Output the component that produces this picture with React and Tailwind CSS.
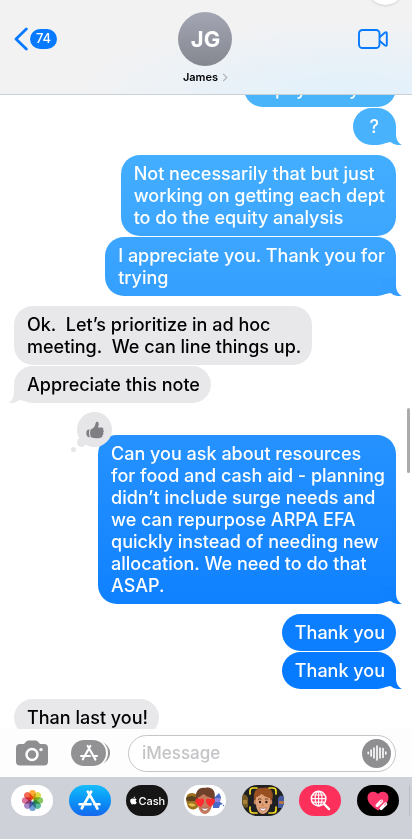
import React from "react";
import { FaApple } from "react-icons/fa";

const messages = [
  { id: 1, text: "A pay study so", sent: true, tone: "bg-[#4ab4fb] text-[#4ab4fb]", gap: "-mt-[25px]" },
  { id: 2, text: "?", sent: true, tail: true, tone: "bg-[#48b2fd] text-[#48b2fd]", gap: "mt-px", wide: true },
  {
    id: 3,
    text: "Not necessarily that but just\nworking on getting each dept\nto do the equity analysis",
    sent: true,
    tone: "bg-linear-to-b from-[#43aefe] to-[#3ca6ff] text-[#3ca6ff]",
    gap: "mt-[10px]",
  },
  {
    id: 4,
    text: "I appreciate you. Thank you for\ntrying",
    sent: true,
    tail: true,
    tone: "bg-linear-to-b from-[#3ca6ff] to-[#349fff] text-[#349fff]",
    gap: "mt-px",
  },
  { id: 5, text: "Ok.  Let’s prioritize in ad hoc\nmeeting.  We can line things up.", tone: "bg-[#e8e8eb] text-[#e8e8eb]", gap: "mt-[10px]" },
  { id: 6, text: "Appreciate this note", tail: true, tone: "bg-[#e8e8eb] text-[#e8e8eb]", gap: "mt-px" },
  {
    id: 7,
    text: "Can you ask about resources\nfor food and cash aid - planning\ndidn’t include surge needs and\nwe can repurpose ARPA EFA\nquickly instead of needing new\nallocation. We need to do that\nASAP.",
    sent: true,
    tail: true,
    liked: true,
    tone: "bg-linear-to-b from-[#2592ff] to-[#0f81ff] text-[#0f81ff]",
    gap: "mt-[32px]",
  },
  { id: 8, text: "Thank you", sent: true, tone: "bg-[#0b7fff] text-[#0b7fff]", gap: "mt-[10px]" },
  { id: 9, text: "Thank you", sent: true, tail: true, tone: "bg-[#067bff] text-[#067bff]", gap: "mt-px" },
  { id: 10, text: "Than last you!", tone: "bg-[#e8e8eb] text-[#e8e8eb]", gap: "mt-[10px]" },
];

function Tail({ sent }) {
  return (
    <svg
      viewBox="0 0 20 18"
      className={sent ? "absolute bottom-0 -right-[6px] h-[18px] w-5" : "absolute bottom-0 -left-[6px] h-[18px] w-5 -scale-x-100"}
      aria-hidden="true"
    >
      <path d="M14 0V7C14 12.5 16 16 20 18C15.5 18.6 11.5 17.5 8.5 15L3 16L0 10V0Z" fill="currentColor" />
    </svg>
  );
}

function Reaction() {
  return (
    <div className="absolute -top-[23px] -left-[21px] flex size-[35px] items-center justify-center rounded-full bg-[#e6e6e9]">
      <span className="absolute bottom-0 left-0 size-[9px] rounded-full bg-[#e6e6e9]" />
      <span className="absolute -bottom-[5px] -left-[6px] size-[5px] rounded-full bg-[#e6e6e9]" />
      <svg viewBox="0 0 18 18" className="relative size-[18px]" fill="#7f7f83" role="img" aria-label="Liked">
        <path d="M3.6 8.6C1.2 8.2.2 10 .3 12.2C.4 14.8 1.6 16.4 3.8 16.2C2.9 13.8 2.8 11 3.6 8.6Z" />
        <path d="M4.6 8.6C7.5 7.3 9 5.4 9.6 2.2C9.9.4 12.2.2 12.6 2.2C12.9 3.9 12.3 5.2 12 6.4H15.6C17.4 6.4 17.8 8 17 8.9C18.2 9.6 18 11 17 11.6C17.8 12.5 17.4 13.8 16.4 14.1C16.8 15.2 16 16.3 14.6 16.7C11.4 17.6 8 17.4 4.9 16.2C3.9 13.8 3.8 11 4.6 8.6Z" />
      </svg>
    </div>
  );
}

function Bubble({ message }) {
  const { text, sent, tail, liked, tone, gap, wide } = message;
  return (
    <li className={`relative w-fit shrink-0 rounded-[19px] pt-2 pb-[7px] ${wide ? "px-[17px]" : "pr-[11px] pl-[13px]"} ${tone} ${gap} ${sent ? "self-end" : "self-start"}`}>
      {tail && <Tail sent={sent} />}
      {liked && <Reaction />}
      <p className={`relative whitespace-pre-wrap text-[18px] leading-[22px] font-medium ${sent ? "text-white" : "text-black"}`}>{text}</p>
    </li>
  );
}

function StoreMark({ className }) {
  return (
    <svg viewBox="0 0 24 24" className={className} fill="none" stroke="currentColor" strokeWidth="2.6" strokeLinecap="round" aria-hidden="true">
      <path d="M13.6 3.5L7.2 15M10.4 3.5L17 15M18.2 17.2L19.6 19.8M5.8 17.4L4.6 19.6M2.5 15.6H13M16.8 15.6H21.5" />
    </svg>
  );
}

function PhotosIcon() {
  const petals = ["#f9a01b", "#d9d72c", "#79bd48", "#43b193", "#5b8fd0", "#9b79bd", "#d65d8e", "#f0563c"];
  return (
    <svg viewBox="0 0 24 24" className="size-[23px]" aria-hidden="true">
      {petals.map((color, i) => (
        <rect key={color} x="8.6" y="1" width="6.8" height="10" rx="3.4" fill={color} fillOpacity="0.88" transform={`rotate(${i * 45} 12 12)`} className="mix-blend-multiply" />
      ))}
    </svg>
  );
}

function Face({ hearts }) {
  return (
    <g>
      <path d="M12 14C11 6 15 2 21 3C28 1 33 7 30 15L28 20H14Z" fill={hearts ? "#70412a" : "#8b4b20"} />
      <ellipse cx="13.5" cy="17" rx="1.8" ry="2.5" fill="#c98462" />
      <ellipse cx="28.5" cy="17" rx="1.8" ry="2.5" fill="#c98462" />
      <path d="M14 12C17 12 18 9 20 9C23 11 26 10 28 12V19C28 25 24 29 21 29C17 29 14 24 14 19Z" fill={hearts ? "#c67a5c" : "#dfa078"} />
      <path d="M12.5 14C11 6 16 3 21 4C28 2 31 8 29 14C26 12 22 12 19 8C18 11 15 11 12.5 14Z" fill={hearts ? "#70412a" : "#994f20"} />
      {hearts ? (
        <g fill="#ff2b2f">
          <path d="M16.5 22C8 17.5 11.5 11.5 16 14.3C20 11.5 22.5 17 16.5 22Z" />
          <path d="M26 22C19.5 17 22 11.5 26.2 14.3C31 11.5 34 17.5 26 22Z" />
        </g>
      ) : (
        <g>
          <path d="M16 14.6Q17.5 13 19.4 14.3M22.8 14.3Q24.5 13 26.2 14.6" stroke="#6c3a1c" strokeWidth="1" fill="none" />
          <circle cx="18" cy="17" r="1.2" fill="#2b1a12" />
          <circle cx="24.4" cy="17" r="1.2" fill="#2b1a12" />
          <path d="M20.8 18L20.2 20.5H22" stroke="#b8734f" strokeWidth="0.8" fill="none" />
        </g>
      )}
      <path d="M17.5 22.8Q21 24.2 24.5 22.8Q23.5 26 21 26T17.5 22.8Z" fill="#fff" stroke="#8d3e32" strokeWidth="0.5" />
    </g>
  );
}

function StickersIcon() {
  return (
    <svg viewBox="0 0 42 31" className="h-full w-full" aria-hidden="true">
      <path d="M2 15Q2 8 8 8T14 15V22Q9 27 4 22Z" fill="#9b711e" />
      <path d="M2 13Q7 9 13 13L12 16H3Z" fill="#594020" />
      <path d="M4 19Q8 17 12 20Q8 24 4 19Z" fill="#e3b84c" />
      <path d="M28 10L31 12L35 8L37 12L36 17L39 19L36 20L35 23L29 23Z" fill="#4969c8" />
      <path d="M31 13H36V17H31Z" fill="#8f82dc" />
      <circle cx="39.5" cy="20.5" r="0.7" fill="#4969c8" />
      <Face hearts />
    </svg>
  );
}

function MemojiIcon() {
  return (
    <svg viewBox="0 0 42 31" className="h-full w-full" aria-hidden="true">
      <path d="M0 10Q4 8 6 13V22Q3 24 0 20Z" fill="#765a24" />
      <path d="M1 15H5V19H1Z" fill="#a88238" />
      <path d="M36 14Q38 8 42 12V23H36Z" fill="#455a9d" />
      <path d="M37 16H42V19H37Z" fill="#b0744d" />
      <Face />
      <path d="M8 9V6Q8 3 11 3H15M27 3H31Q34 3 34 6V9M34 22V25Q34 28 31 28H27M15 28H11Q8 28 8 25V22" fill="none" stroke="#f5dc24" strokeWidth="1.7" strokeLinecap="round" />
    </svg>
  );
}

function ImageSearchIcon() {
  return (
    <svg viewBox="0 0 24 24" className="size-[23px]" fill="none" stroke="white" strokeWidth="1.2" aria-hidden="true">
      <circle cx="10" cy="10" r="7.6" strokeWidth="1.6" />
      <ellipse cx="10" cy="10" rx="3.6" ry="7.6" />
      <path d="M10 2.4V17.6M2.4 10H17.6M4 6.3H16M4 13.7H16" />
      <path d="M15.8 15.8L21 21" strokeWidth="2.4" strokeLinecap="round" />
    </svg>
  );
}

function TouchIcon() {
  return (
    <svg viewBox="0 0 24 24" className="size-6" aria-hidden="true">
      <path d="M12 21.5C5 17 1.5 13 1.5 8.5C1.5 2.5 8.5.8 12 5C15.5.8 22.5 2.5 22.5 8.5C22.5 13 19 17 12 21.5Z" fill="#fb3569" />
      <path d="M11.2 16.4L15.4 12.2M15.2 19.4L19.6 15" stroke="#fff" strokeWidth="3.4" strokeLinecap="round" />
      <path d="M14.8 12.8L15.6 12M18.8 15.8L19.8 14.8" stroke="#fb8aa8" strokeWidth="1.4" strokeLinecap="round" />
    </svg>
  );
}

const apps = [
  { name: "Photos", style: "bg-white", icon: <PhotosIcon /> },
  { name: "App Store", style: "bg-linear-to-b from-[#18bcfc] to-[#1668ee] text-white", icon: <StoreMark className="size-[25px]" /> },
  {
    name: "Apple Cash",
    style: "bg-[#151515] text-white",
    icon: (
      <span className="flex items-center text-[11px] leading-4 font-medium">
        <FaApple className="size-[9px]" aria-hidden="true" />
        Cash
      </span>
    ),
  },
  { name: "Memoji Stickers", style: "bg-white", icon: <StickersIcon /> },
  { name: "Memoji", style: "bg-[#202023]", icon: <MemojiIcon /> },
  { name: "Images", style: "bg-[#fd2f5b]", icon: <ImageSearchIcon /> },
  { name: "Digital Touch", style: "bg-black", icon: <TouchIcon /> },
];

function Header() {
  return (
    <header className="relative grid h-[95px] shrink-0 grid-cols-3 overflow-hidden border-b border-[#c8d0d8] bg-[radial-gradient(ellipse_at_85%_100%,#e1f1fc,#f2f2f3_55%)] pr-[15px] pl-[14px] pt-3">
      <span className="absolute -top-8 right-[8px] size-[37px] rounded-full bg-white shadow-sm" />
      <button type="button" aria-label="Back, 74 unread" className="mt-[15px] flex h-6 items-center gap-[2px] justify-self-start">
        <svg viewBox="0 0 14 24" className="h-6 w-[14px]" fill="none" stroke="#087aff" strokeWidth="2.8" strokeLinecap="round" strokeLinejoin="round" aria-hidden="true">
          <path d="M12.3 2L2 12L12.3 22" />
        </svg>
        <span className="flex h-5 w-[27px] items-center justify-center rounded-full bg-[#087aff] text-[13px] font-medium text-white">74</span>
      </button>
      <button type="button" className="flex flex-col items-center justify-self-center">
        <span className="flex size-[54px] items-center justify-center rounded-full bg-linear-to-b from-[#a3a6b3] to-[#858790] text-[22px] font-bold text-white">JG</span>
        <span className="mt-[3px] flex items-center gap-1 text-[11px] leading-4 font-semibold text-black">
          James
          <svg viewBox="0 0 6 10" className="h-[9px] w-[6px]" fill="none" stroke="#b4b4b8" strokeWidth="1.4" aria-hidden="true">
            <path d="M1 1L5 5L1 9" />
          </svg>
        </span>
      </button>
      <button type="button" aria-label="Video call" className="mt-[17px] mr-[9px] h-5 justify-self-end">
        <svg viewBox="0 0 30 20" className="h-5 w-[30px]" fill="none" stroke="#087aff" strokeWidth="1.9" strokeLinejoin="round" aria-hidden="true">
          <rect x="1" y="1" width="20.5" height="18" rx="3.5" />
          <path d="M21.5 8.3L27 3.5Q28.8 2.5 28.8 4.5V15.5Q28.8 17.5 27 16.5L21.5 11.7" />
        </svg>
      </button>
    </header>
  );
}

function Composer() {
  return (
    <form className="flex h-12 shrink-0 items-center bg-[#fdfdfe] pr-4 pl-4" onSubmit={(e) => e.preventDefault()}>
      <button type="button" aria-label="Camera" className="shrink-0">
        <svg viewBox="0 0 32 26" className="h-[26px] w-8" aria-hidden="true">
          <path d="M4 4H8L10 1.8Q11 .6 12.5.6H19.5Q21 .6 22 1.8L24 4H28Q32 4 32 8V21.5Q32 25.5 28 25.5H4Q0 25.5 0 21.5V8Q0 4 4 4Z" fill="#8f8f92" />
          <circle cx="16" cy="14.5" r="5.5" fill="none" stroke="#fff" strokeWidth="2.4" />
          <circle cx="25" cy="9.6" r="1.7" fill="#fff" />
        </svg>
      </button>
      <button type="button" aria-label="Apps" className="relative ml-[23px] flex h-[26px] w-[39px] shrink-0 items-center">
        <span className="absolute right-0 h-[22px] w-6 rounded-full bg-[#929295]" />
        <span className="relative flex h-[26px] w-[35px] items-center justify-center rounded-full bg-[#929295] text-white shadow-[1px_0_0_1px_white]">
          <StoreMark className="size-5" />
        </span>
      </button>
      <div className="ml-[18px] flex h-[37px] min-w-0 flex-1 items-center rounded-full border border-[#c5c5c8] bg-white pr-1 pl-[13px]">
        <input aria-label="Message" placeholder="iMessage" className="min-w-0 flex-1 bg-transparent text-[17px] leading-[22px] font-medium outline-none placeholder:text-[#c4c4c7]" />
        <button type="button" aria-label="Record audio" className="flex size-[29px] shrink-0 items-center justify-center rounded-full bg-[#8f8f92]">
          <svg viewBox="0 0 20 16" className="h-4 w-5" stroke="#fff" strokeWidth="1.6" strokeLinecap="round" aria-hidden="true">
            <path d="M1.2 7.4V8.6M4.1 5V11M7 3V13M10 1V15M13 3V13M16 3.6V12.4M18.8 7V9" />
          </svg>
        </button>
      </div>
    </form>
  );
}

export default function App() {
  return (
    <div className="flex h-dvh flex-col overflow-hidden bg-white font-[Inter,'Liberation_Sans',sans-serif]">
      <Header />
      <main className="relative min-h-0 flex-1 overflow-hidden">
        <ol className="flex h-full flex-col overflow-hidden pr-4 pl-[14px]">
          {messages.map((message) => (
            <Bubble key={message.id} message={message} />
          ))}
        </ol>
        <span className="absolute top-[313px] right-[2px] h-[65px] w-[3px] rounded-full bg-[#acacae]" />
      </main>
      <Composer />
      <nav aria-label="Message apps" className="relative flex h-[62px] shrink-0 items-start justify-between bg-[#cfd1d8] pt-2 pr-[13px] pl-[11px]">
        {apps.map((app) => (
          <button key={app.name} type="button" aria-label={app.name} className={`flex h-[31px] w-[42px] items-center justify-center overflow-hidden rounded-full ${app.style}`}>
            {app.icon}
          </button>
        ))}
        <span className="absolute top-2 right-[2px] h-[31px] w-px bg-[#bcbec5]" />
      </nav>
    </div>
  );
}
